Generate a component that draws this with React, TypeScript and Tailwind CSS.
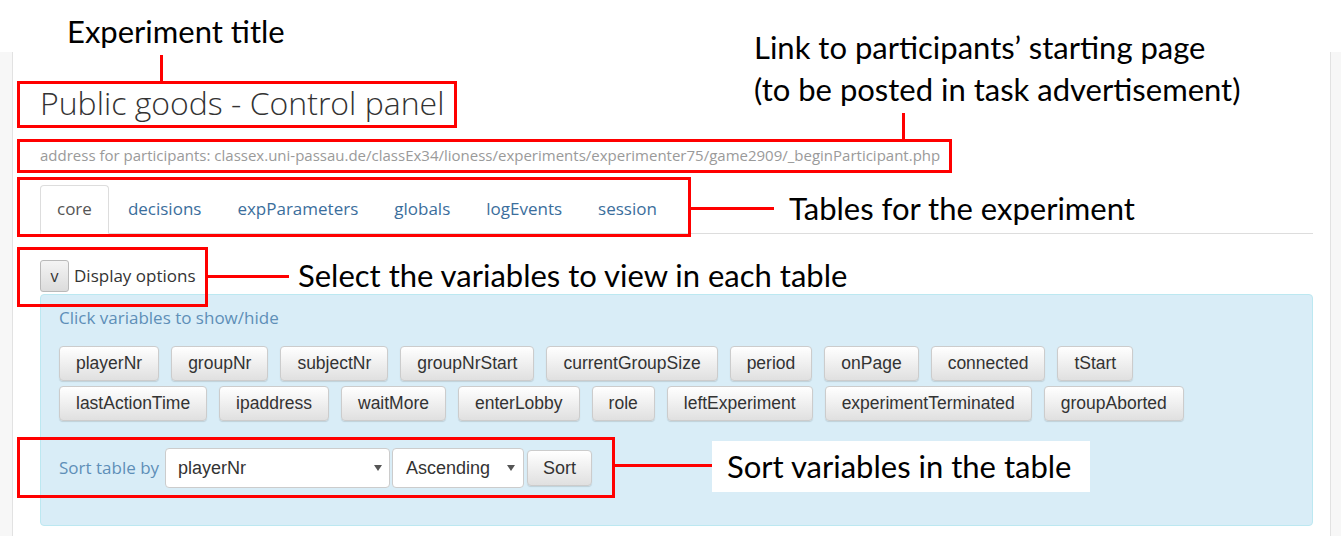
const row1 = ['playerNr', 'groupNr', 'subjectNr', 'groupNrStart', 'currentGroupSize', 'period', 'onPage', 'connected', 'tStart']
const row2 = ['lastActionTime', 'ipaddress', 'waitMore', 'enterLobby', 'role', 'leftExperiment', 'experimentTerminated', 'groupAborted']
const tabs = ['core', 'decisions', 'expParameters', 'globals', 'logEvents', 'session']

function VarButton({ label }: { label: string }) {
  return (
    <button className="h-[35px] rounded-[4px] border border-[#ccc] bg-linear-to-b from-white to-[#e0e0e0] px-4 font-['Liberation_Sans',Arial,sans-serif] text-[17.5px] text-[#333] shadow-[0_1px_1px_rgba(0,0,0,0.12)]">
      {label}
    </button>
  )
}

function Caret() {
  return (
    <svg width="8" height="6" viewBox="0 0 8 6" className="shrink-0">
      <path d="M0 0h8L4 6z" fill="#555" />
    </svg>
  )
}

export default function App() {
  return (
    <div className="relative h-[536px] w-[1341px] overflow-hidden bg-white font-['Open_Sans',sans-serif]">
      <div className="h-[52px]" />
      <div className="flex h-[484px]">
        <div className="w-[13px] border-r border-[#e2e2e2] bg-[#f7f7f7]" />
        <main className="flex-1 pl-[27px] pr-[17px]">
          <h1 className="pt-[31px] text-[32px] font-light leading-[40px] text-[#333]">
            Public goods - Control panel
          </h1>
          <p className="mt-[22px] text-[15px] leading-[20px] text-[#9a9a9a]">
            address for participants: classex.uni-passau.de/classEx34/lioness/experiments/experimenter75/game2909/_beginParticipant.php
          </p>

          {/* tables */}
          <nav className="mt-[20px] flex border-b border-[#ddd]">
            {tabs.map((t, i) => (
              <a
                key={t}
                className={
                  i === 0
                    ? '-mb-px mr-[2px] rounded-t-[4px] border border-[#ddd] border-b-white bg-white px-[16px] py-3 text-[17px] leading-[22px] text-[#555]'
                    : 'mr-[2px] border border-transparent px-[16px] py-3 text-[17px] leading-[22px] text-[#3b6e9c]'
                }
              >
                {t}
              </a>
            ))}
          </nav>

          <div className="mt-[26px] flex items-center gap-[5px]">
            <button className="h-[32px] w-[29px] rounded-[3px] border border-[#b9b9b9] bg-linear-to-b from-[#f4f4f4] to-[#dcdcdc] text-[16px] text-[#333]">
              v
            </button>
            <span className="text-[17px] text-[#333]">Display options</span>
          </div>

          <section className="mt-[2px] h-[232px] rounded-[4px] border border-[#bce8f1] bg-[#d9edf7] px-[18px] pt-[12px]">
            <p className="text-[17px] leading-[22px] text-[#5e8fb8]">Click variables to show/hide</p>
            <div className="mt-[17px] flex flex-col gap-[5px]">
              <div className="flex gap-[12px]">
                {row1.map((v) => (
                  <VarButton key={v} label={v} />
                ))}
              </div>
              <div className="flex gap-[12px]">
                {row2.map((v) => (
                  <VarButton key={v} label={v} />
                ))}
              </div>
            </div>

            <div className="mt-[27px] flex items-center">
              <span className="mr-[6px] text-[17px] text-[#5e8fb8]">Sort table by</span>
              <div className="flex h-[40px] w-[225px] items-center justify-between rounded-[4px] border border-[#ccc] bg-white pl-[12px] pr-[7px] font-['Liberation_Sans',Arial,sans-serif] text-[18px] text-[#333]">
                playerNr
                <Caret />
              </div>
              <div className="ml-[2px] flex h-[40px] w-[132px] items-center justify-between rounded-[4px] border border-[#ccc] bg-white pl-[13px] pr-[8px] font-['Liberation_Sans',Arial,sans-serif] text-[18px] text-[#333]">
                Ascending
                <Caret />
              </div>
              <button className="ml-[3px] h-[36px] w-[65px] rounded-[4px] border border-[#ccc] bg-linear-to-b from-white to-[#e0e0e0] font-['Liberation_Sans',Arial,sans-serif] text-[18px] text-[#333] shadow-[0_1px_1px_rgba(0,0,0,0.12)]">
                Sort
              </button>
            </div>
          </section>
        </main>
        <div className="w-[11px] border-l border-[#e2e2e2] bg-[#f7f7f7]" />
      </div>

      {/* annotations */}
      <div className="absolute left-[67px] top-[12px] font-['Lato',sans-serif] text-[31px] leading-[38px] text-black">Experiment title</div>
      <div className="absolute left-[160px] top-[55px] h-[26px] w-[3px] bg-[#f00]" />
      <div className="absolute left-[17px] top-[81px] h-[47px] w-[440px] border-[3px] border-[#f00]" />

      <div className="absolute left-[754px] top-[26px] font-['Lato',sans-serif] text-[31px] leading-[42px] text-black">
        <div>Link to participants’ starting page</div>
        <div>(to be posted in task advertisement)</div>
      </div>
      <div className="absolute left-[902px] top-[113px] h-[27px] w-[3px] bg-[#f00]" />
      <div className="absolute left-[17px] top-[139px] h-[34px] w-[935px] border-[3px] border-[#f00]" />

      <div className="absolute left-[17px] top-[177px] h-[60px] w-[674px] border-[3px] border-[#f00]" />
      <div className="absolute left-[690px] top-[207px] h-[3px] w-[84px] bg-[#f00]" />
      <div className="absolute left-[789px] top-[190px] font-['Lato',sans-serif] text-[31px] leading-[36px] text-black">Tables for the experiment</div>

      <div className="absolute left-[17px] top-[247px] h-[60px] w-[191px] border-[3px] border-[#f00]" />
      <div className="absolute left-[207px] top-[275px] h-[3px] w-[82px] bg-[#f00]" />
      <div className="absolute left-[298px] top-[257px] font-['Lato',sans-serif] text-[31px] leading-[36px] text-black">Select the variables to view in each table</div>

      <div className="absolute left-[17px] top-[437px] h-[61px] w-[598px] border-[3px] border-[#f00]" />
      <div className="absolute left-[614px] top-[464px] h-[3px] w-[99px] bg-[#f00]" />
      <div className="absolute left-[712px] top-[441px] flex h-[51px] w-[378px] items-center bg-white pl-[15px] font-['Lato',sans-serif] text-[31px] text-black">
        Sort variables in the table
      </div>
    </div>
  )
}
